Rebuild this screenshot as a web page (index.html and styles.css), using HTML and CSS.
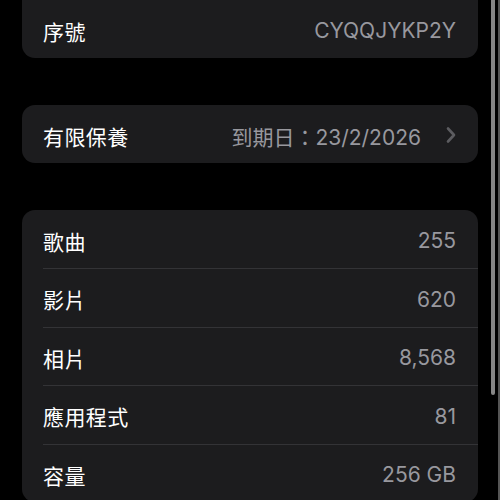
FILE: index.html
```html
<!DOCTYPE html>
<html lang="zh-Hant">
<head>
    <meta charset="UTF-8">
    <meta name="viewport" content="width=device-width, initial-scale=1.0">
    <title>關於本機</title>
    <link rel="stylesheet" href="styles.css">
</head>
<body>
    <div class="page">
        <div class="group group-first">
            <div class="row">
                <span class="label">序號</span>
                <span class="value">CYQQJYKP2Y</span>
            </div>
        </div>

        <div class="group">
            <div class="row">
                <span class="label">有限保養</span>
                <span class="value">到期日：23/2/2026</span>
                <svg class="chevron" width="10" height="18" viewBox="0 0 10 18">
                    <path d="M2 2.5 L8 9 L2 15.5" fill="none" stroke="#5c5c60" stroke-width="2.6" stroke-linecap="round" stroke-linejoin="round"/>
                </svg>
            </div>
        </div>

        <div class="group">
            <div class="row">
                <span class="label">歌曲</span>
                <span class="value">255</span>
            </div>
            <div class="row">
                <span class="label">影片</span>
                <span class="value">620</span>
            </div>
            <div class="row">
                <span class="label">相片</span>
                <span class="value">8,568</span>
            </div>
            <div class="row">
                <span class="label">應用程式</span>
                <span class="value">81</span>
            </div>
            <div class="row">
                <span class="label">容量</span>
                <span class="value">256 GB</span>
            </div>
        </div>
    </div>

    <div class="scroll-thumb"></div>
    <div class="edge-line"></div>
</body>
</html>
```

FILE: styles.css
```css
html, body {
    margin: 0;
    padding: 0;
    background-color: #000;
    height: 500px;
    overflow: hidden;
}
body {
    font-family: Inter, "Noto Sans CJK TC", sans-serif;
    color: #fff;
    position: relative;
}
.page {
    padding: 0 22px;
    display: flex;
    flex-direction: column;
    gap: 47px;
}
.group {
    background-color: #1c1c1e;
    border-radius: 13px;
    overflow: hidden;
}
.group-first {
    margin-top: -20px;
    padding-top: 20px;
}
.row {
    display: flex;
    align-items: center;
    height: 58px;
    margin-left: 21px;
    padding-right: 22px;
}
.row + .row {
    border-top: 1px solid #333336;
    height: 57.5px;
}
.label {
    flex: 1;
    font-size: 21px;
    letter-spacing: 0.4px;
    padding-top: 3px;
}
.value {
    font-size: 21px;
    color: #98989e;
    padding-top: 3px;
}
.chevron {
    margin-left: 25px;
    margin-top: 2px;
}
.scroll-thumb {
    position: absolute;
    left: 491px;
    top: 0;
    width: 4px;
    height: 395px;
    background-color: #868686;
    border-radius: 0 0 2px 2px;
}
.edge-line {
    position: absolute;
    left: 498px;
    top: 0;
    width: 2px;
    height: 500px;
    background-color: #555;
}
```
